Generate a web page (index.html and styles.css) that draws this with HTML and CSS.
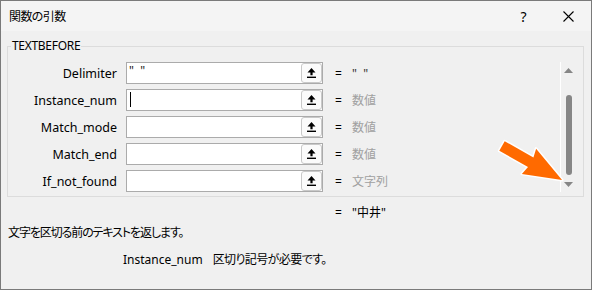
FILE: index.html
```html
<!DOCTYPE html>
<html lang="ja">
<head>
    <meta charset="UTF-8">
    <title>関数の引数</title>
    <link rel="stylesheet" href="styles.css">
</head>
<body>
    <div class="dialog">
        <!-- Title bar -->
        <div class="titlebar">
            <span class="title ja">関数の引数</span>
            <span class="cap-btn help">?</span>
            <span class="cap-btn close">
                <svg width="11" height="11" viewBox="0 0 11 11"><path d="M0.5 0.5L10.5 10.5M10.5 0.5L0.5 10.5" stroke="#000" stroke-width="1.1" fill="none"/></svg>
            </span>
        </div>

        <div class="content">
            <fieldset class="group">
                <legend>TEXTBEFORE</legend>
                <div class="group-inner">
                    <div class="rows">
                        <div class="row">
                            <span class="label">Delimiter</span>
                            <div class="field"><span class="field-text">"&nbsp;&nbsp;"</span><span class="pick"><svg width="9" height="10" viewBox="0 0 9 10"><polygon points="4.5,0 8.5,4.5 5.6,4.5 5.6,7.3 3.4,7.3 3.4,4.5 0.5,4.5" fill="#000"/><rect x="0" y="8.6" width="9" height="1.4" fill="#000"/></svg></span></div>
                            <span class="eq">=</span>
                            <span class="val val-text">"&nbsp;&nbsp;"</span>
                        </div>
                        <div class="row">
                            <span class="label">Instance_num</span>
                            <div class="field"><span class="caret"></span><span class="pick"><svg width="9" height="10" viewBox="0 0 9 10"><polygon points="4.5,0 8.5,4.5 5.6,4.5 5.6,7.3 3.4,7.3 3.4,4.5 0.5,4.5" fill="#000"/><rect x="0" y="8.6" width="9" height="1.4" fill="#000"/></svg></span></div>
                            <span class="eq">=</span>
                            <span class="val">数値</span>
                        </div>
                        <div class="row">
                            <span class="label">Match_mode</span>
                            <div class="field"><span></span><span class="pick"><svg width="9" height="10" viewBox="0 0 9 10"><polygon points="4.5,0 8.5,4.5 5.6,4.5 5.6,7.3 3.4,7.3 3.4,4.5 0.5,4.5" fill="#000"/><rect x="0" y="8.6" width="9" height="1.4" fill="#000"/></svg></span></div>
                            <span class="eq">=</span>
                            <span class="val">数値</span>
                        </div>
                        <div class="row">
                            <span class="label">Match_end</span>
                            <div class="field"><span></span><span class="pick"><svg width="9" height="10" viewBox="0 0 9 10"><polygon points="4.5,0 8.5,4.5 5.6,4.5 5.6,7.3 3.4,7.3 3.4,4.5 0.5,4.5" fill="#000"/><rect x="0" y="8.6" width="9" height="1.4" fill="#000"/></svg></span></div>
                            <span class="eq">=</span>
                            <span class="val">数値</span>
                        </div>
                        <div class="row">
                            <span class="label">If_not_found</span>
                            <div class="field"><span></span><span class="pick"><svg width="9" height="10" viewBox="0 0 9 10"><polygon points="4.5,0 8.5,4.5 5.6,4.5 5.6,7.3 3.4,7.3 3.4,4.5 0.5,4.5" fill="#000"/><rect x="0" y="8.6" width="9" height="1.4" fill="#000"/></svg></span></div>
                            <span class="eq">=</span>
                            <span class="val">文字列</span>
                        </div>
                    </div>

                    <!-- Scrollbar -->
                    <div class="scrollbar">
                        <svg class="sb-arrow" width="9" height="5" viewBox="0 0 9 5"><polygon points="4.5,0 9,5 0,5" fill="#868686"/></svg>
                        <div class="sb-thumb"></div>
                        <svg class="sb-arrow down" width="9" height="5" viewBox="0 0 9 5"><polygon points="0,0 9,0 4.5,5" fill="#868686"/></svg>
                    </div>
                </div>
            </fieldset>

            <div class="result"><span class="eq">=</span><span class="result-val">"中井"</span></div>
            <p class="desc ja">文字を区切る前のテキストを返します。</p>
            <p class="arg-help"><span class="arg-name">Instance_num</span><span class="ja">区切り記号が必要です。</span></p>
        </div>

        <!-- Orange pointer arrow -->
        <svg class="pointer" width="592" height="290" viewBox="0 0 592 290">
            <polygon transform="translate(502 146) rotate(29.5)" points="0,-5.5 33,-5.5 31,-14.5 69,0 31,14.5 33,5.5 0,5.5" fill="#ff6a00" stroke="#fff" stroke-width="3" stroke-linejoin="round" paint-order="stroke"/>
        </svg>
    </div>
</body>
</html>
```

FILE: styles.css
```css
body {
    margin: 0;
    padding: 0;
    background-color: #f0f0f0;
    font-family: 'Noto Sans', 'Noto Sans CJK JP', sans-serif;
    font-size: 12px;
    font-feature-settings: "palt";
    color: #000;
}

.ja {
    letter-spacing: -0.6px;
}

.dialog {
    position: relative;
    width: 592px;
    height: 290px;
    box-sizing: border-box;
    border: 1px solid #7a7a7a;
    background-color: #f0f0f0;
}

.titlebar {
    height: 30px;
    display: flex;
    align-items: center;
    background-color: #f4f4f4;
    padding-left: 8px;
}

.title {
    flex: 1;
    font-size: 12px;
}

.cap-btn {
    width: 45px;
    height: 30px;
    display: flex;
    align-items: center;
    justify-content: center;
}

.help {
    font-size: 14px;
}

.content {
    padding: 7px 7px 0 6px;
}

.group {
    margin: 0;
    padding: 8px 7px 4px 0;
    border: 1px solid #dcdcdc;
}

.group legend {
    margin-left: 3px;
    padding: 0 1px;
    line-height: 16px;
    font-size: 12px;
    letter-spacing: -0.3px;
}

.group-inner {
    display: flex;
}

.rows {
    flex: 1;
    display: flex;
    flex-direction: column;
    gap: 5px;
}

.row {
    display: flex;
    align-items: center;
    height: 22px;
}

.label {
    width: 109px;
    text-align: right;
    margin-right: 9px;
    font-size: 12.5px;
}

.field {
    width: 197px;
    height: 22px;
    box-sizing: border-box;
    border: 1px solid #ababab;
    background-color: #fff;
    display: flex;
    justify-content: space-between;
}

.field-text {
    padding-left: 2px;
    line-height: 16px;
    color: #202020;
}

.caret {
    width: 1px;
    height: 15px;
    margin: 2px 0 0 3px;
    background-color: #000;
}

.pick {
    width: 21px;
    height: 20px;
    box-sizing: border-box;
    border: 1px solid #c9c9c9;
    border-radius: 3px;
    background-color: #fbfbfb;
    display: flex;
    align-items: center;
    justify-content: center;
}

.eq {
    margin-left: 12px;
    width: 6px;
}

.val {
    margin-left: 11px;
    color: #a0a0a0;
}

.val-text {
    color: #303030;
}

.scrollbar {
    width: 16px;
    box-sizing: border-box;
    border-left: 1px solid #fff;
    display: flex;
    flex-direction: column;
    align-items: center;
    padding-top: 6px;
}

.sb-thumb {
    width: 6px;
    height: 80px;
    margin-top: 22px;
    border-radius: 3px;
    background-color: #868686;
}

.sb-arrow.down {
    margin-top: 7px;
}

.result {
    display: flex;
    margin: 8px 0 0 316px;
    line-height: 16px;
}

.result-val {
    margin-left: 11px;
}

.desc {
    margin: 4px 0 0 1px;
    line-height: 16px;
    letter-spacing: -1.1px;
}

.arg-help {
    margin: 11px 0 0 116px;
    line-height: 16px;
}

.arg-name {
    margin-right: 10px;
}

.pointer {
    position: absolute;
    left: -1px;
    top: -1px;
    pointer-events: none;
}
```
